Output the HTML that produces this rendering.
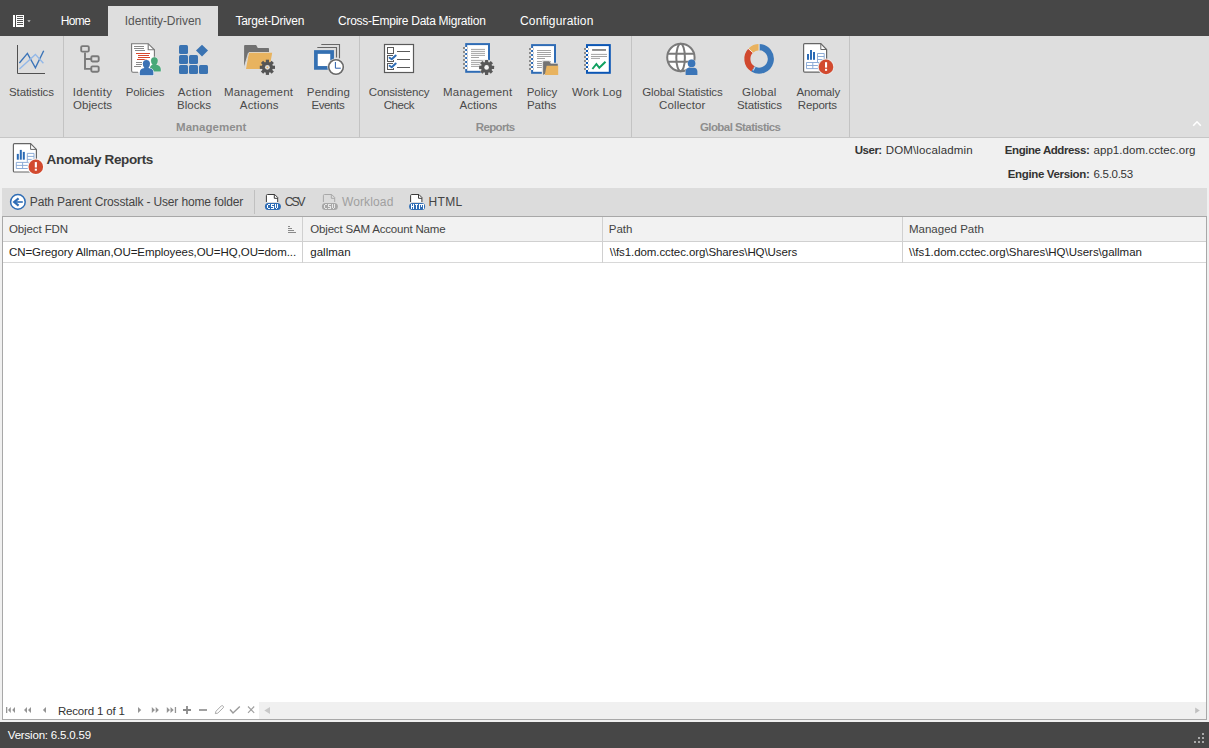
<!DOCTYPE html>
<html><head><meta charset="utf-8"><style>
*{box-sizing:border-box;margin:0;padding:0}
html,body{width:1209px;height:748px;overflow:hidden;background:#f0f0f0;font-family:"Liberation Sans",sans-serif;position:relative}
.t{position:absolute;white-space:nowrap;line-height:20px;height:20px;z-index:3}
.b{position:absolute}
#ic{position:absolute;left:0;top:0;z-index:2}

</style></head><body>
<div class="b" style="left:0;top:0;width:1209px;height:36px;background:#474747"></div>
<div class="b" style="left:108px;top:6px;width:110px;height:30px;background:#dedede"></div>
<div class="b" style="left:0;top:36px;width:1209px;height:101px;background:#dedede"></div>
<div class="b" style="left:0;top:137px;width:1209px;height:1px;background:#c6c6c6"></div>
<div class="b" style="left:63px;top:36px;width:1px;height:101px;background:#c3c3c3"></div>
<div class="b" style="left:359px;top:36px;width:1px;height:101px;background:#c3c3c3"></div>
<div class="b" style="left:631px;top:36px;width:1px;height:101px;background:#c3c3c3"></div>
<div class="b" style="left:849px;top:36px;width:1px;height:101px;background:#c3c3c3"></div>
<div class="b" style="left:2px;top:188px;width:1205px;height:28px;background:#dcdcdc"></div>
<div class="b" style="left:254px;top:190px;width:1px;height:24px;background:#c0c0c0"></div>
<div class="b" style="left:2px;top:216px;width:1205px;height:504px;background:#fff;border:1px solid #a8a8a8"></div>
<div class="b" style="left:3px;top:217px;width:1203px;height:25px;background:#f2f2f2;border-bottom:1px solid #d0d0d0"></div>
<div class="b" style="left:3px;top:262px;width:1203px;height:1px;background:#d8d8d8"></div>
<div class="b" style="left:302px;top:217px;width:1px;height:46px;background:#d0d0d0"></div>
<div class="b" style="left:602px;top:217px;width:1px;height:46px;background:#d0d0d0"></div>
<div class="b" style="left:902px;top:217px;width:1px;height:46px;background:#d0d0d0"></div>
<div class="b" style="left:259px;top:702px;width:947px;height:17px;background:#f0f0f0"></div>
<div class="b" style="left:0;top:722px;width:1209px;height:26px;background:#474747"></div>

<svg id="ic" width="1209" height="748" viewBox="0 0 1209 748">
<!-- app menu icon -->
<rect x="13" y="15" width="2" height="12" fill="#fff"/>
<rect x="16" y="15" width="8" height="12" fill="#fff"/>
<g fill="#555"><rect x="17" y="16" width="6" height="1"/><rect x="17" y="18" width="6" height="1"/><rect x="17" y="20" width="6" height="1"/><rect x="17" y="22" width="6" height="1"/><rect x="17" y="24" width="6" height="1"/></g>
<path d="M27.3 20.2H30.7L29 22.2Z" fill="#c8c8c8"/>
<!-- Statistics -->
<g fill="none">
<path d="M17.5 45v28.5H45" stroke="#505050" stroke-width="1"/>
<path d="M19.4 63L27.4 53.4 35.4 67.8 43.7 50.7" stroke="#3b74b8" stroke-width="1.4"/>
<path d="M19.4 68.9L35.4 54.4 43.4 63.3" stroke="#93b8e8" stroke-width="1.4"/>
</g>
<!-- Identity Objects -->
<g fill="none" stroke="#7a7a7a" stroke-width="1.9">
<rect x="81.2" y="46.1" width="7.6" height="5.5" rx="1.2"/>
<rect x="91.3" y="56.2" width="7.4" height="5.3" rx="1.2"/>
<rect x="91.3" y="66.4" width="7.4" height="5.3" rx="1.2"/>
<path d="M85 52.5V68.9H91.3M85 59H91.3"/>
</g>
<!-- Policies -->
<g>
<path d="M131.6 43.7H148.2L154.4 49.8V72.1H131.6Z" fill="#fff"/>
<path d="M154.4 58V49.8L148.2 43.7H131.6V70.8Q131.6 72.2 133 72.2H138" fill="none" stroke="#777" stroke-width="1.1"/>
<path d="M148.2 43.7V49.8H154.4" fill="none" stroke="#777" stroke-width="1.1"/>
<g stroke="#8a8a8a" stroke-width="1"><path d="M134 46.5H144M134 48.5H144M135 50.5H145M136 62.5H142M136 64.5H142M134 66.5H141"/></g>
<g stroke="#d9472b" stroke-width="1"><path d="M136 53.5H150M138 55.5H149M138 57.5H150M137 59.5H147"/></g>
<g fill="#48a878" stroke="#eeeeee" stroke-width="1" paint-order="stroke">
<path d="M151 60.8A3.4 3.6 0 1 1 157.8 60.8Q157.8 63.5 156.2 64.8Q160.6 65.6 160.8 69V71.4H149.8V69Q150 65.6 152.6 64.8Q151 63.5 151 60.8Z"/>
</g>
<g fill="#3a72b5" stroke="#ffffff" stroke-width="1.2" paint-order="stroke">
<path d="M142.8 63.8A3.6 3.9 0 1 1 150 63.8Q150 66.6 148.4 68Q153.2 68.6 153.4 72.2V75.2H139.8V72.2Q140 68.6 144.4 68Q142.8 66.6 142.8 63.8Z"/>
</g>
</g>
<!-- Action Blocks -->
<g fill="#3a73b2">
<rect x="179" y="45" width="9" height="9" rx="1.5"/>
<rect x="179" y="55" width="9" height="9" rx="1.5"/><rect x="189" y="55" width="9" height="9" rx="1.5"/>
<rect x="179" y="65" width="9" height="9" rx="1.5"/><rect x="189" y="65" width="9" height="9" rx="1.5"/><rect x="199" y="65" width="9" height="9" rx="1.5"/>
<path d="M202 44.8L208 50.6 202 56.4 196 50.6Z"/>
</g>
<!-- Management Actions (folder gear) -->
<g>
<path d="M244.1 67.8V46Q244.1 45.1 245 45.1H256.1L257.8 48H268.2Q269 48 269 48.8V52H249Z" fill="#717171"/>
<path d="M248.9 52.8H272.2L269.2 68.9H246Z" fill="#e8b35f"/>
<path d="M244.1 67.8L248.5 52.8" stroke="#dedede" stroke-width="0.9"/>
<g transform="translate(267.4 67.3)">
<circle r="5.6" fill="#555"/>
<g fill="#555"><rect x="-1.6" y="-7.6" width="3.2" height="15.2"/><rect x="-7.6" y="-1.6" width="15.2" height="3.2"/><rect x="-1.6" y="-7.6" width="3.2" height="15.2" transform="rotate(45)"/><rect x="-1.6" y="-7.6" width="3.2" height="15.2" transform="rotate(-45)"/></g>
<circle r="2.4" fill="#dedede"/><circle r="0.9" fill="#e8b35f"/>
</g>
</g>
<!-- Pending Events -->
<g>
<path d="M321.3 44.5H339.5V58.2" fill="none" stroke="#666" stroke-width="1.1"/>
<path d="M317.3 47.5H336.5V57.6" fill="none" stroke="#666" stroke-width="1.1"/>
<rect x="315.9" y="52" width="16.2" height="15.9" fill="#fff" stroke="#3470b2" stroke-width="3.7"/>
<circle cx="336" cy="67" r="8.7" fill="#e6e6e6"/>
<circle cx="336" cy="67" r="7.3" fill="#fff" stroke="#6a6a6a" stroke-width="1.6"/>
<path d="M335.4 62V68.2H340.8" fill="none" stroke="#2a5ea8" stroke-width="1"/>
</g>
<!-- Consistency Check -->
<g>
<rect x="384.5" y="44.5" width="29" height="28" fill="#fff" stroke="#5a5a5a" stroke-width="1.2"/>
<g fill="none" stroke="#5a5a5a" stroke-width="1" shape-rendering="crispEdges"><rect x="387.5" y="47.5" width="6" height="6"/><path d="M393 55.5H387.5V61.5H393.5V60M393 63.5H387.5V69.5H393.5V68"/>
<path d="M397 51.5H410M397 59.5H410M397 67.5H410"/></g>
<path d="M389.6 57.8L391.7 59.3 395.7 55.6M389.6 65.8L391.7 67.3 395.7 63.6" fill="none" stroke="#2f6db5" stroke-width="2" stroke-linecap="round" stroke-linejoin="round"/>
</g>
<!-- Management Actions (report notebook + gear) -->
<g>
<rect x="466.2" y="44.1" width="22.8" height="27.7" fill="#fff" stroke="#2f6cb5" stroke-width="2"/>
<g shape-rendering="crispEdges"><rect x="463" y="47" width="2" height="2" fill="#8a8a8a"/><rect x="465" y="47" width="2" height="2" fill="#fff"/><rect x="467" y="47" width="1" height="2" fill="#c8c8c8"/><rect x="463" y="51" width="2" height="2" fill="#8a8a8a"/><rect x="465" y="51" width="2" height="2" fill="#fff"/><rect x="467" y="51" width="1" height="2" fill="#c8c8c8"/><rect x="463" y="55" width="2" height="2" fill="#8a8a8a"/><rect x="465" y="55" width="2" height="2" fill="#fff"/><rect x="467" y="55" width="1" height="2" fill="#c8c8c8"/><rect x="463" y="59" width="2" height="2" fill="#8a8a8a"/><rect x="465" y="59" width="2" height="2" fill="#fff"/><rect x="467" y="59" width="1" height="2" fill="#c8c8c8"/><rect x="463" y="63" width="2" height="2" fill="#8a8a8a"/><rect x="465" y="63" width="2" height="2" fill="#fff"/><rect x="467" y="63" width="1" height="2" fill="#c8c8c8"/><rect x="463" y="67" width="2" height="2" fill="#8a8a8a"/><rect x="465" y="67" width="2" height="2" fill="#fff"/><rect x="467" y="67" width="1" height="2" fill="#c8c8c8"/></g>
<g stroke="#9a9a9a" stroke-width="0.9"><path d="M471 49.4H485M471 51.4H485M471 53.4H485M471 55.4H485M471 57.5H479M471 60.4H485M471 62.4H485M471 64.4H485M471 66.4H480"/></g>
<g transform="translate(486.6 67.4)">
<circle r="7.8" fill="#dedede"/>
<circle r="5.6" fill="#585858"/>
<g fill="#585858"><rect x="-1.6" y="-7.5" width="3.2" height="15" rx="0.5"/><rect x="-7.5" y="-1.6" width="15" height="3.2" rx="0.5"/><rect x="-1.6" y="-7.5" width="3.2" height="15" transform="rotate(45)"/><rect x="-1.6" y="-7.5" width="3.2" height="15" transform="rotate(-45)"/></g>
<circle r="2.3" fill="#f4f4f4"/>
</g>
</g>
<!-- Policy Paths -->
<g>
<rect x="532.1" y="45.1" width="22.9" height="27.7" fill="#fff" stroke="#2f6cb5" stroke-width="2"/>
<g shape-rendering="crispEdges"><rect x="529" y="48" width="2" height="2" fill="#8a8a8a"/><rect x="531" y="48" width="2" height="2" fill="#fff"/><rect x="533" y="48" width="1" height="2" fill="#c8c8c8"/><rect x="529" y="52" width="2" height="2" fill="#8a8a8a"/><rect x="531" y="52" width="2" height="2" fill="#fff"/><rect x="533" y="52" width="1" height="2" fill="#c8c8c8"/><rect x="529" y="56" width="2" height="2" fill="#8a8a8a"/><rect x="531" y="56" width="2" height="2" fill="#fff"/><rect x="533" y="56" width="1" height="2" fill="#c8c8c8"/><rect x="529" y="60" width="2" height="2" fill="#8a8a8a"/><rect x="531" y="60" width="2" height="2" fill="#fff"/><rect x="533" y="60" width="1" height="2" fill="#c8c8c8"/><rect x="529" y="64" width="2" height="2" fill="#8a8a8a"/><rect x="531" y="64" width="2" height="2" fill="#fff"/><rect x="533" y="64" width="1" height="2" fill="#c8c8c8"/><rect x="529" y="68" width="2" height="2" fill="#8a8a8a"/><rect x="531" y="68" width="2" height="2" fill="#fff"/><rect x="533" y="68" width="1" height="2" fill="#c8c8c8"/></g>
<g stroke="#9a9a9a" stroke-width="0.9"><path d="M537 50.5H551M537 52.5H551M537 54.5H551M537 56.5H551M537 58.5H545M537 61.5H551M537 63.5H551M537 65.5H551M537 67.5H542"/></g>
<path d="M541.8 76V61.2Q541.8 60.3 542.7 60.3H549.5L551.2 62.7H558.5V76Z" fill="#dedede"/>
<path d="M543.1 74.9V62.2Q543.1 61.3 544 61.3H549.3L550.8 63.7H557.8V66Z" fill="#737373"/>
<path d="M546.6 65.8H558.2V74.9H544.8Z" fill="#e8b35f"/>
</g>
<!-- Work Log -->
<g>
<rect x="587" y="45.1" width="22.8" height="27.7" fill="#fff" stroke="#0b56b4" stroke-width="2"/>
<g shape-rendering="crispEdges"><rect x="584" y="48" width="2" height="2" fill="#8a8a8a"/><rect x="586" y="48" width="2" height="2" fill="#fff"/><rect x="588" y="48" width="1" height="2" fill="#c8c8c8"/><rect x="584" y="52" width="2" height="2" fill="#8a8a8a"/><rect x="586" y="52" width="2" height="2" fill="#fff"/><rect x="588" y="52" width="1" height="2" fill="#c8c8c8"/><rect x="584" y="56" width="2" height="2" fill="#8a8a8a"/><rect x="586" y="56" width="2" height="2" fill="#fff"/><rect x="588" y="56" width="1" height="2" fill="#c8c8c8"/><rect x="584" y="60" width="2" height="2" fill="#8a8a8a"/><rect x="586" y="60" width="2" height="2" fill="#fff"/><rect x="588" y="60" width="1" height="2" fill="#c8c8c8"/><rect x="584" y="64" width="2" height="2" fill="#8a8a8a"/><rect x="586" y="64" width="2" height="2" fill="#fff"/><rect x="588" y="64" width="1" height="2" fill="#c8c8c8"/><rect x="584" y="68" width="2" height="2" fill="#8a8a8a"/><rect x="586" y="68" width="2" height="2" fill="#fff"/><rect x="588" y="68" width="1" height="2" fill="#c8c8c8"/></g>
<rect x="592.1" y="49" width="13.9" height="1.9" fill="#8a8a8a"/>
<g stroke="#9a9a9a" stroke-width="0.9"><path d="M591 54.4H607M591 56.5H607M591 58.4H600"/></g>
<path d="M592.4 69L596.4 64 599.3 67.8 605.5 61.8" fill="none" stroke="#10a060" stroke-width="2"/>
</g>
<!-- Global Statistics Collector -->
<g fill="none" stroke="#7a7a7a" stroke-width="2">
<circle cx="680.9" cy="57.5" r="13.7" fill="#fff"/>
<ellipse cx="680.6" cy="57.5" rx="4.3" ry="13.7"/>
<path d="M668 53.8H694M668 61.8H694"/>
</g>
<g fill="#3b75b8" stroke="#dedede" stroke-width="1" paint-order="stroke">
<circle cx="691.6" cy="63.4" r="3.8"/>
<path d="M685.6 75V71.5Q685.8 68 689.5 67.7H693.8Q697.3 68 697.4 71.5V75Z"/>
</g>
<!-- Global Statistics donut -->
<g fill="none" stroke-width="6.1">
<path d="M759.1 47.15A11.75 11.75 0 1 1 752.9 68.9" stroke="#3b77b8"/>
<path d="M752.9 68.9A11.75 11.75 0 0 1 750.7 50.7" stroke="#d0482e"/>
<path d="M750.7 50.7A11.75 11.75 0 0 1 759.1 47.15" stroke="#e9b25e"/>
</g>
<g stroke="#f4f4f4" stroke-width="0.9"><path d="M759.1 44V50.4M753.2 70.6L755.2 66.7M748 48.3L752.8 52.6"/></g>
<!-- Anomaly Reports -->
<g transform="translate(0 0)">
<path d="M803.6 44.8Q803.6 43.7 804.7 43.7H820.8L826.6 49.5V72.1H804.7Q803.6 72.1 803.6 71Z" fill="#fff" stroke="#666" stroke-width="1.2"/>
<path d="M820.8 43.7V49.5H826.6" fill="none" stroke="#666" stroke-width="1"/>
<g fill="#2a6ab5"><rect x="807" y="54" width="2" height="5.8"/><rect x="810" y="50" width="2" height="9.8"/><rect x="813" y="52" width="2" height="7.8"/></g>
<g fill="none" stroke="#82a4d2" stroke-width="0.9"><path d="M817.5 53.5H824.2V62M817.5 53.5V62M817.5 56.5H824.2M817.5 59.5H824.2M806.5 62.5H819M806.5 62.5V68.6H819V62.5M806.5 65.5H819M812.8 62.5V68.6"/></g>
<circle cx="826" cy="66.9" r="8.4" fill="#e8e8e8"/>
<circle cx="826" cy="66.9" r="7.3" fill="#d24a2f"/>
<rect x="825" y="62.2" width="2.1" height="5.4" fill="#fff"/><rect x="825" y="68.8" width="2.1" height="2" fill="#fff"/>
</g>
<!-- header icon -->
<g transform="translate(-790.2 99.9)">
<path d="M803.6 44.8Q803.6 43.7 804.7 43.7H820.8L826.6 49.5V72.1H804.7Q803.6 72.1 803.6 71Z" fill="#fff" stroke="#666" stroke-width="1.2"/>
<path d="M820.8 43.7V49.5H826.6" fill="none" stroke="#666" stroke-width="1"/>
<g fill="#2a6ab5"><rect x="807" y="54" width="2" height="5.8"/><rect x="810" y="50" width="2" height="9.8"/><rect x="813" y="52" width="2" height="7.8"/></g>
<g fill="none" stroke="#82a4d2" stroke-width="0.9"><path d="M817.5 53.5H824.2V62M817.5 53.5V62M817.5 56.5H824.2M817.5 59.5H824.2M806.5 62.5H819M806.5 62.5V68.6H819V62.5M806.5 65.5H819M812.8 62.5V68.6"/></g>
<circle cx="826" cy="66.9" r="8.4" fill="#f8f8f8"/>
<circle cx="826" cy="66.9" r="7.3" fill="#d24a2f"/>
<rect x="825" y="62.2" width="2.1" height="5.4" fill="#fff"/><rect x="825" y="68.8" width="2.1" height="2" fill="#fff"/>
</g>
<!-- ribbon collapse -->
<path d="M1193.2 125.8L1197 121.8 1200.8 125.8" fill="none" stroke="#fff" stroke-width="1.6"/>
<!-- toolbar back -->
<circle cx="17.9" cy="201.9" r="7.3" fill="#fff" stroke="#2f6db5" stroke-width="1.5"/>
<path d="M22.8 202H15" fill="none" stroke="#2f6db5" stroke-width="1.6"/><path d="M18.6 198.4L14.2 202 18.6 205.6" fill="none" stroke="#2f6db5" stroke-width="2.2" stroke-linejoin="miter"/>
<!-- CSV -->
<path d="M266.4 202V195.6Q266.4 194.5 267.5 194.5H274.7L277.7 197.5V202" fill="#fff" stroke="#3a3a3a" stroke-width="1"/>
<path d="M274.29999999999995 194.5V198.3H277.7" fill="none" stroke="#3a3a3a" stroke-width="1"/>
<rect x="264.9" y="203" width="16" height="7" rx="3.5" fill="#2f6db5"/>
<g fill="#fff" shape-rendering="crispEdges"><rect x="268" y="204" width="1" height="1"/><rect x="269" y="204" width="1" height="1"/><rect x="267" y="205" width="1" height="1"/><rect x="267" y="206" width="1" height="1"/><rect x="267" y="207" width="1" height="1"/><rect x="268" y="208" width="1" height="1"/><rect x="269" y="208" width="1" height="1"/><rect x="271" y="204" width="1" height="1"/><rect x="272" y="204" width="1" height="1"/><rect x="273" y="204" width="1" height="1"/><rect x="271" y="205" width="1" height="1"/><rect x="271" y="206" width="1" height="1"/><rect x="272" y="206" width="1" height="1"/><rect x="273" y="206" width="1" height="1"/><rect x="273" y="207" width="1" height="1"/><rect x="271" y="208" width="1" height="1"/><rect x="272" y="208" width="1" height="1"/><rect x="273" y="208" width="1" height="1"/><rect x="275" y="204" width="1" height="1"/><rect x="277" y="204" width="1" height="1"/><rect x="275" y="205" width="1" height="1"/><rect x="277" y="205" width="1" height="1"/><rect x="275" y="206" width="1" height="1"/><rect x="277" y="206" width="1" height="1"/><rect x="275" y="207" width="1" height="1"/><rect x="277" y="207" width="1" height="1"/><rect x="276" y="208" width="1" height="1"/></g>
<path d="M323.4 202V195.6Q323.4 194.5 324.5 194.5H331.7L334.7 197.5V202" fill="none" stroke="#a8a8a8" stroke-width="1"/>
<path d="M331.29999999999995 194.5V198.3H334.7" fill="none" stroke="#a8a8a8" stroke-width="1"/>
<rect x="321.9" y="203" width="16" height="7" rx="3.5" fill="#a8a8a8"/>
<g fill="#e8e8e8" shape-rendering="crispEdges"><rect x="325" y="204" width="1" height="1"/><rect x="326" y="204" width="1" height="1"/><rect x="324" y="205" width="1" height="1"/><rect x="324" y="206" width="1" height="1"/><rect x="324" y="207" width="1" height="1"/><rect x="325" y="208" width="1" height="1"/><rect x="326" y="208" width="1" height="1"/><rect x="328" y="204" width="1" height="1"/><rect x="329" y="204" width="1" height="1"/><rect x="330" y="204" width="1" height="1"/><rect x="328" y="205" width="1" height="1"/><rect x="328" y="206" width="1" height="1"/><rect x="329" y="206" width="1" height="1"/><rect x="330" y="206" width="1" height="1"/><rect x="330" y="207" width="1" height="1"/><rect x="328" y="208" width="1" height="1"/><rect x="329" y="208" width="1" height="1"/><rect x="330" y="208" width="1" height="1"/><rect x="332" y="204" width="1" height="1"/><rect x="334" y="204" width="1" height="1"/><rect x="332" y="205" width="1" height="1"/><rect x="334" y="205" width="1" height="1"/><rect x="332" y="206" width="1" height="1"/><rect x="334" y="206" width="1" height="1"/><rect x="332" y="207" width="1" height="1"/><rect x="334" y="207" width="1" height="1"/><rect x="333" y="208" width="1" height="1"/></g>
<path d="M410.6 202V195.6Q410.6 194.5 411.70000000000005 194.5H418.90000000000003L421.90000000000003 197.5V202" fill="#fff" stroke="#3a3a3a" stroke-width="1"/>
<path d="M418.5 194.5V198.3H421.90000000000003" fill="none" stroke="#3a3a3a" stroke-width="1"/>
<rect x="409.1" y="203" width="16" height="7" rx="3.5" fill="#2f6db5"/>
<g fill="#fff" shape-rendering="crispEdges"><rect x="411" y="204" width="1" height="1"/><rect x="413" y="204" width="1" height="1"/><rect x="411" y="205" width="1" height="1"/><rect x="413" y="205" width="1" height="1"/><rect x="411" y="206" width="1" height="1"/><rect x="412" y="206" width="1" height="1"/><rect x="413" y="206" width="1" height="1"/><rect x="411" y="207" width="1" height="1"/><rect x="413" y="207" width="1" height="1"/><rect x="411" y="208" width="1" height="1"/><rect x="413" y="208" width="1" height="1"/><rect x="415" y="204" width="1" height="1"/><rect x="416" y="204" width="1" height="1"/><rect x="417" y="204" width="1" height="1"/><rect x="416" y="205" width="1" height="1"/><rect x="416" y="206" width="1" height="1"/><rect x="416" y="207" width="1" height="1"/><rect x="416" y="208" width="1" height="1"/><rect x="419" y="204" width="1" height="1"/><rect x="420" y="204" width="1" height="1"/><rect x="421" y="204" width="1" height="1"/><rect x="422" y="204" width="1" height="1"/><rect x="423" y="204" width="1" height="1"/><rect x="419" y="205" width="1" height="1"/><rect x="421" y="205" width="1" height="1"/><rect x="423" y="205" width="1" height="1"/><rect x="419" y="206" width="1" height="1"/><rect x="421" y="206" width="1" height="1"/><rect x="423" y="206" width="1" height="1"/><rect x="419" y="207" width="1" height="1"/><rect x="423" y="207" width="1" height="1"/><rect x="419" y="208" width="1" height="1"/><rect x="423" y="208" width="1" height="1"/></g>
<!-- sort icon -->
<g fill="#8a8a8a" shape-rendering="crispEdges"><rect x="288" y="226" width="2" height="1"/><rect x="288" y="228" width="4" height="1"/><rect x="288" y="230" width="6" height="1"/><rect x="288" y="232" width="8" height="1"/></g>
<!-- nav icons -->
<g fill="#949494">
<rect x="6" y="707" width="1.3" height="6"/><path d="M10.8 707V713L8 710ZM15 707V713L12.2 710Z"/>
<path d="M27 707V713L24 710ZM31 707V713L28 710Z"/>
<path d="M46 707V713L42.9 710Z"/>
<path d="M138 707V713L141.2 710Z"/>
<path d="M151.8 707V713L155 710ZM155.7 707V713L158.9 710Z"/>
<path d="M166.8 707V713L170 710ZM170.5 707V713L173.7 710Z"/><rect x="174.8" y="707" width="1.3" height="6"/>
</g>
<g fill="none" stroke="#8a8a8a">
<path d="M183 710H191M187 706V714" stroke-width="1.8"/>
<path d="M199 710H207" stroke-width="1.6"/>
<path d="M215.3 713.6L216 711.2 221.4 705.8Q222.2 705.2 223 706L223.3 706.3Q223.9 707 223.3 707.7L217.8 713.1Z" stroke-width="0.9" stroke="#a0a0a0"/>
<path d="M230 709.5L233 713 239.8 706.5" stroke-width="1.4" stroke="#9a9a9a"/>
<path d="M248 706.5L254.2 712.8M254.2 706.5L248 712.8" stroke-width="1.1" stroke="#a0a0a0"/>
</g>
<path d="M270 706.9V714L264.3 710.45Z" fill="#c8c8c8"/>
<path d="M1195.2 707.4V713.6L1199.8 710.5Z" fill="#c0c0c0"/>
<!-- grip -->
<g fill="#a8a8a8"><rect x="1202" y="733" width="2" height="2"/><rect x="1198" y="737" width="2" height="2"/><rect x="1202" y="737" width="2" height="2"/><rect x="1194" y="741" width="2" height="2"/><rect x="1198" y="741" width="2" height="2"/><rect x="1202" y="741" width="2" height="2"/></g>

</svg>
<div class="t" id="tab1" style="left:60.70px;top:11.00px;font-size:12px;color:#ffffff;letter-spacing:-0.667px">Home</div>
<div class="t" id="tab2" style="left:124.80px;top:11.00px;font-size:12px;color:#555555;letter-spacing:-0.071px">Identity-Driven</div>
<div class="t" id="tab3" style="left:235.40px;top:11.00px;font-size:12px;color:#ffffff;letter-spacing:-0.250px">Target-Driven</div>
<div class="t" id="tab4" style="left:338.10px;top:11.00px;font-size:12px;color:#ffffff;letter-spacing:-0.269px">Cross-Empire Data Migration</div>
<div class="t" id="tab5" style="left:520.00px;top:11.00px;font-size:12px;color:#ffffff;letter-spacing:0.167px">Configuration</div>
<div class="t" id="r1" style="left:9.00px;top:81.52px;font-size:11.5px;color:#4a4a4a;letter-spacing:-0.111px">Statistics</div>
<div class="t" id="r2a" style="left:72.80px;top:81.52px;font-size:11.5px;color:#4a4a4a;letter-spacing:0.286px">Identity</div>
<div class="t" id="r2b" style="left:73.10px;top:94.92px;font-size:11.5px;color:#4a4a4a;letter-spacing:0.000px">Objects</div>
<div class="t" id="r3" style="left:125.80px;top:81.52px;font-size:11.5px;color:#4a4a4a;letter-spacing:-0.143px">Policies</div>
<div class="t" id="r4a" style="left:177.80px;top:81.52px;font-size:11.5px;color:#4a4a4a;letter-spacing:0.400px">Action</div>
<div class="t" id="r4b" style="left:177.10px;top:94.92px;font-size:11.5px;color:#4a4a4a;letter-spacing:0.000px">Blocks</div>
<div class="t" id="r5a" style="left:223.90px;top:81.52px;font-size:11.5px;color:#4a4a4a;letter-spacing:0.222px">Management</div>
<div class="t" id="r5b" style="left:239.80px;top:94.92px;font-size:11.5px;color:#4a4a4a;letter-spacing:0.167px">Actions</div>
<div class="t" id="r6a" style="left:306.80px;top:81.52px;font-size:11.5px;color:#4a4a4a;letter-spacing:0.167px">Pending</div>
<div class="t" id="r6b" style="left:311.50px;top:94.92px;font-size:11.5px;color:#4a4a4a;letter-spacing:-0.400px">Events</div>
<div class="t" id="r7a" style="left:368.80px;top:81.52px;font-size:11.5px;color:#4a4a4a;letter-spacing:-0.200px">Consistency</div>
<div class="t" id="r7b" style="left:383.80px;top:94.92px;font-size:11.5px;color:#4a4a4a;letter-spacing:-0.500px">Check</div>
<div class="t" id="r8a" style="left:443.00px;top:81.52px;font-size:11.5px;color:#4a4a4a;letter-spacing:0.222px">Management</div>
<div class="t" id="r8b" style="left:459.60px;top:94.92px;font-size:11.5px;color:#4a4a4a;letter-spacing:0.000px">Actions</div>
<div class="t" id="r9a" style="left:526.70px;top:81.52px;font-size:11.5px;color:#4a4a4a;letter-spacing:0.000px">Policy</div>
<div class="t" id="r9b" style="left:526.90px;top:94.92px;font-size:11.5px;color:#4a4a4a;letter-spacing:0.000px">Paths</div>
<div class="t" id="r10" style="left:571.90px;top:81.52px;font-size:11.5px;color:#4a4a4a;letter-spacing:0.143px">Work Log</div>
<div class="t" id="r11a" style="left:642.30px;top:81.52px;font-size:11.5px;color:#4a4a4a;letter-spacing:-0.125px">Global Statistics</div>
<div class="t" id="r11b" style="left:659.00px;top:94.92px;font-size:11.5px;color:#4a4a4a;letter-spacing:0.125px">Collector</div>
<div class="t" id="r12a" style="left:742.10px;top:81.52px;font-size:11.5px;color:#4a4a4a;letter-spacing:0.200px">Global</div>
<div class="t" id="r12b" style="left:737.00px;top:94.92px;font-size:11.5px;color:#4a4a4a;letter-spacing:-0.111px">Statistics</div>
<div class="t" id="r13a" style="left:796.50px;top:81.52px;font-size:11.5px;color:#4a4a4a;letter-spacing:-0.167px">Anomaly</div>
<div class="t" id="r13b" style="left:797.80px;top:94.92px;font-size:11.5px;color:#4a4a4a;letter-spacing:-0.167px">Reports</div>
<div class="t" id="g1" style="left:176.10px;top:117.03px;font-size:11.5px;color:#8e8e8e;letter-spacing:0.000px;font-weight:bold">Management</div>
<div class="t" id="g2" style="left:475.80px;top:117.03px;font-size:11.5px;color:#8e8e8e;letter-spacing:-0.667px;font-weight:bold">Reports</div>
<div class="t" id="g3" style="left:699.90px;top:117.03px;font-size:11.5px;color:#8e8e8e;letter-spacing:-0.562px;font-weight:bold">Global Statistics</div>
<div class="t" id="h1" style="left:46.60px;top:150.33px;font-size:13.5px;color:#3a3a3a;letter-spacing:-0.357px;font-weight:bold">Anomaly Reports</div>
<div class="t" id="h2" style="left:854.80px;top:140.03px;font-size:11.5px;color:#333333;letter-spacing:-0.500px;font-weight:bold">User:</div>
<div class="t" id="h3" style="left:885.70px;top:140.03px;font-size:11.5px;color:#333333;letter-spacing:0.154px">DOM\localadmin</div>
<div class="t" id="h4" style="left:1004.80px;top:140.03px;font-size:11.5px;color:#333333;letter-spacing:-0.429px;font-weight:bold">Engine Address:</div>
<div class="t" id="h5" style="left:1093.50px;top:140.03px;font-size:11.5px;color:#333333;letter-spacing:0.059px">app1.dom.cctec.org</div>
<div class="t" id="h6" style="left:1007.80px;top:163.82px;font-size:11.5px;color:#333333;letter-spacing:-0.357px;font-weight:bold">Engine Version:</div>
<div class="t" id="h7" style="left:1093.50px;top:163.82px;font-size:11.5px;color:#333333;letter-spacing:-0.286px">6.5.0.53</div>
<div class="t" id="b1" style="left:29.80px;top:192.30px;font-size:12px;color:#444444;letter-spacing:-0.154px">Path Parent Crosstalk - User home folder</div>
<div class="t" id="b2" style="left:284.80px;top:192.30px;font-size:12px;color:#444444;letter-spacing:-2.000px">CSV</div>
<div class="t" id="b3" style="left:341.90px;top:192.30px;font-size:12px;color:#a0a0a0;letter-spacing:0.143px">Workload</div>
<div class="t" id="b4" style="left:428.60px;top:192.30px;font-size:12px;color:#444444;letter-spacing:0.333px">HTML</div>
<div class="t" id="c1" style="left:9.00px;top:219.12px;font-size:11.5px;color:#444444;letter-spacing:-0.111px">Object FDN</div>
<div class="t" id="c2" style="left:310.30px;top:219.12px;font-size:11.5px;color:#444444;letter-spacing:-0.182px">Object SAM Account Name</div>
<div class="t" id="c3" style="left:608.80px;top:219.12px;font-size:11.5px;color:#444444;letter-spacing:0.000px">Path</div>
<div class="t" id="c4" style="left:909.00px;top:219.12px;font-size:11.5px;color:#444444;letter-spacing:0.000px">Managed Path</div>
<div class="t" id="d1" style="left:9.00px;top:242.42px;font-size:11.5px;color:#222222;letter-spacing:-0.067px">CN=Gregory Allman,OU=Employees,OU=HQ,OU=dom...</div>
<div class="t" id="d2" style="left:310.30px;top:242.42px;font-size:11.5px;color:#222222;letter-spacing:0.000px">gallman</div>
<div class="t" id="d3" style="left:609.80px;top:242.42px;font-size:11.5px;color:#222222;letter-spacing:-0.088px">\\fs1.dom.cctec.org\Shares\HQ\Users</div>
<div class="t" id="d4" style="left:909.00px;top:242.42px;font-size:11.5px;color:#222222;letter-spacing:-0.024px">\\fs1.dom.cctec.org\Shares\HQ\Users\gallman</div>
<div class="t" id="n1" style="left:57.90px;top:701.02px;font-size:11.5px;color:#333333;letter-spacing:-0.167px">Record 1 of 1</div>
<div class="t" id="s1" style="left:7.80px;top:725.12px;font-size:11.5px;color:#ffffff;letter-spacing:-0.188px">Version: 6.5.0.59</div>
</body></html>
